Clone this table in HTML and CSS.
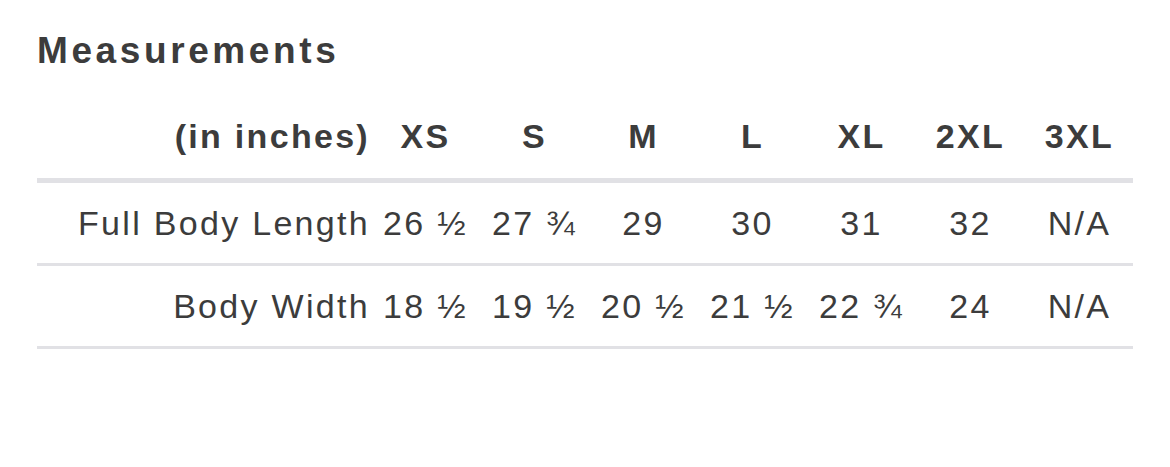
FILE: index.html
```html
<!DOCTYPE html>
<html lang="en">
<head>
<meta charset="utf-8">
<title>Measurements</title>
<link rel="stylesheet" href="styles.css">
</head>
<body>
<div class="wrap">
  <h1 class="title">Measurements</h1>
  <div class="chart">
    <div class="row head">
      <div class="label">(in inches)</div>
      <div class="cell">XS</div>
      <div class="cell">S</div>
      <div class="cell">M</div>
      <div class="cell">L</div>
      <div class="cell">XL</div>
      <div class="cell">2XL</div>
      <div class="cell">3XL</div>
    </div>
    <div class="row">
      <div class="label">Full Body Length</div>
      <div class="cell">26 ½</div>
      <div class="cell">27 ¾</div>
      <div class="cell">29</div>
      <div class="cell">30</div>
      <div class="cell">31</div>
      <div class="cell">32</div>
      <div class="cell">N/A</div>
    </div>
    <div class="row">
      <div class="label">Body Width</div>
      <div class="cell">18 ½</div>
      <div class="cell">19 ½</div>
      <div class="cell">20 ½</div>
      <div class="cell">21 ½</div>
      <div class="cell">22 ¾</div>
      <div class="cell">24</div>
      <div class="cell">N/A</div>
    </div>
  </div>
</div>
</body>
</html>
```

FILE: styles.css
```css
html, body {
  margin: 0;
  padding: 0;
  background: #ffffff;
}

body {
  font-family: "Liberation Sans", Arial, Helvetica, sans-serif;
  color: #3c3c3c;
}

.wrap {
  width: 1096px;
  padding: 33px 0 0 37px;
}

.title {
  margin: 0 0 50px;
  font-size: 37px;
  line-height: 36px;
  font-weight: 700;
  letter-spacing: 3.6px;
}

.chart {
  display: flex;
  flex-direction: column;
}

.row {
  display: grid;
  grid-template-columns: 1fr repeat(7, 109px);
  font-size: 34px;
  line-height: 34px;
  letter-spacing: 2.3px;
  padding: 23px 0;
  border-bottom: 3px solid #e1e1e5;
}

.row.head {
  padding: 0 0 25px;
  font-weight: 700;
  border-bottom-width: 5px;
}

.label {
  text-align: right;
  white-space: nowrap;
}

.cell {
  text-align: center;
  white-space: nowrap;
  padding-left: 2px;
}
```
